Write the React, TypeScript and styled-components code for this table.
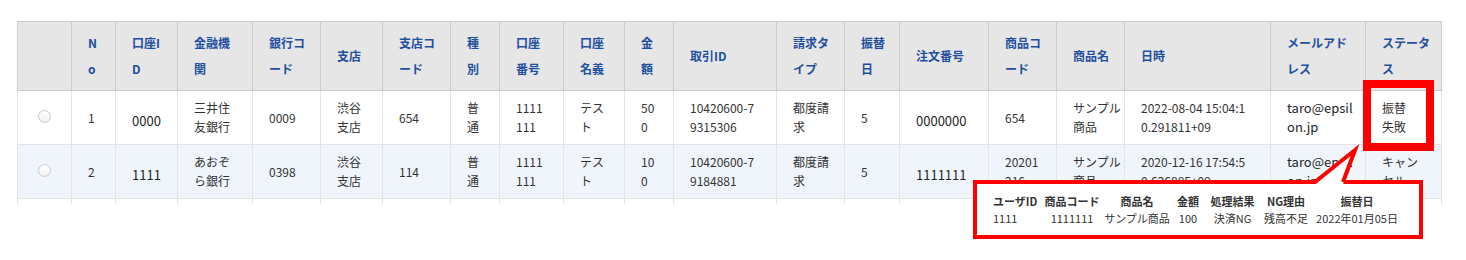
import React from "react";
import styled, { createGlobalStyle } from "styled-components";

const GlobalStyle = createGlobalStyle`
  html, body {
    margin: 0;
    padding: 0;
    background: #ffffff;
  }
  body {
    font-family: "Noto Sans CJK JP", "Noto Sans", sans-serif;
    color: #333333;
  }
`;

const Page = styled.div`
  position: relative;
  width: 1466px;
  height: 260px;
  box-sizing: border-box;
  padding: 21px 0 0 17px;
  overflow: hidden;
`;

const TableViewport = styled.div`
  width: 1425px;
  height: 183px;
  overflow: hidden;
`;

const Table = styled.table`
  border-collapse: collapse;
  table-layout: fixed;
  width: 1424px;
`;

const Col = styled.col<{ $w: number }>`
  width: ${(p) => p.$w}px;
`;

const HeadCell = styled.th`
  background: #e6e6e6;
  border: 1px solid #cdcdcd;
  color: #1f4f9f;
  font-size: 12px;
  font-weight: 700;
  line-height: 26px;
  padding: 8px 0 8px 16px;
  text-align: left;
  vertical-align: middle;
  white-space: pre;
  overflow: hidden;
`;

const BodyRow = styled.tr<{ $alt?: boolean }>`
  background: ${(p) => (p.$alt ? "#f0f5fc" : "#ffffff")};
`;

const Cell = styled.td<{ $large?: boolean; $center?: boolean; $shift?: number }>`
  border: 1px solid #e3e3e3;
  color: ${(p) => (p.$large ? "#262626" : "#333333")};
  font-size: ${(p) => (p.$large ? 13 : 12)}px;
  line-height: 19px;
  padding: ${(p) => 7 + (p.$shift ?? 0)}px 0 ${(p) => 8 - (p.$shift ?? 0)}px
    ${(p) => (p.$center ? 0 : 16)}px;
  text-align: ${(p) => (p.$center ? "center" : "left")};
  vertical-align: middle;
  white-space: pre;
  overflow: hidden;
`;

const Radio = styled.span`
  display: inline-block;
  width: 13px;
  height: 13px;
  box-sizing: border-box;
  border: 1px solid #c9c9c9;
  border-radius: 50%;
  background: linear-gradient(#ffffff, #f1f1f1);
  vertical-align: middle;
`;

const StatusHighlight = styled.div`
  position: absolute;
  left: 1363px;
  top: 80px;
  width: 71px;
  height: 71px;
  box-sizing: border-box;
  border: 8px solid #ff0000;
  pointer-events: none;
`;

const Callout = styled.div`
  position: absolute;
  left: 973px;
  top: 180px;
  width: 450px;
  height: 59px;
  box-sizing: border-box;
  border: 4px solid #ff0000;
  background: #ffffff;
  padding: 9px 0 0 16px;
`;

const CalloutGrid = styled.div`
  display: grid;
  grid-template-columns: 48px 62px 68px 34px 55px 52px 90px;
  font-size: 11px;
  line-height: 17px;
  color: #333333;
  white-space: nowrap;
`;

const CalloutText = styled.span<{ $head?: boolean; $first?: boolean }>`
  font-weight: ${(p) => (p.$head ? 600 : 400)};
  text-align: ${(p) => (p.$first ? "left" : "center")};
`;

const Tail = styled.svg`
  position: absolute;
  left: 1305px;
  top: 146px;
  width: 56px;
  height: 40px;
  overflow: visible;
`;

type Column = { w: number; head: string };

const columns: Column[] = [
  { w: 54, head: "" },
  { w: 44, head: "N\no" },
  { w: 62, head: "口座I\nD" },
  { w: 75, head: "金融機\n関" },
  { w: 68, head: "銀行コ\nード" },
  { w: 62, head: "支店" },
  { w: 68, head: "支店コ\nード" },
  { w: 49, head: "種\n別" },
  { w: 64, head: "口座\n番号" },
  { w: 61, head: "口座\n名義" },
  { w: 49, head: "金\n額" },
  { w: 103, head: "取引ID" },
  { w: 68, head: "請求タ\nイプ" },
  { w: 55, head: "振替\n日" },
  { w: 89, head: "注文番号" },
  { w: 68, head: "商品コ\nード" },
  { w: 68, head: "商品名" },
  { w: 146, head: "日時" },
  { w: 95, head: "メールアド\nレス" },
  { w: 76, head: "ステータ\nス" },
];

type Row = {
  no: string;
  accountId: string;
  bank: string;
  bankCode: string;
  branch: string;
  branchCode: string;
  kind: string;
  accountNo: string;
  holder: string;
  amount: string;
  txId: string;
  billing: string;
  day: string;
  order: string;
  productCode: string;
  product: string;
  datetime: string;
  mail: string;
  status: string;
};

const rows: Row[] = [
  {
    no: "1",
    accountId: "0000",
    bank: "三井住\n友銀行",
    bankCode: "0009",
    branch: "渋谷\n支店",
    branchCode: "654",
    kind: "普\n通",
    accountNo: "1111\n111",
    holder: "テス\nト",
    amount: "50\n0",
    txId: "10420600-7\n9315306",
    billing: "都度請\n求",
    day: "5",
    order: "0000000",
    productCode: "654",
    product: "サンプル\n商品",
    datetime: "2022-08-04 15:04:1\n0.291811+09",
    mail: "taro@epsil\non.jp",
    status: "振替\n失敗",
  },
  {
    no: "2",
    accountId: "1111",
    bank: "あおぞ\nら銀行",
    bankCode: "0398",
    branch: "渋谷\n支店",
    branchCode: "114",
    kind: "普\n通",
    accountNo: "1111\n111",
    holder: "テス\nト",
    amount: "10\n0",
    txId: "10420600-7\n9184881",
    billing: "都度請\n求",
    day: "5",
    order: "1111111",
    productCode: "20201\n216",
    product: "サンプル\n商品",
    datetime: "2020-12-16 17:54:5\n0.626885+09",
    mail: "taro@epsil\non.jp",
    status: "キャン\nセル",
  },
  {
    no: "3",
    accountId: "2222",
    bank: "みずほ\n銀行",
    bankCode: "0001",
    branch: "渋谷\n支店",
    branchCode: "210",
    kind: "普\n通",
    accountNo: "1111\n111",
    holder: "テス\nト",
    amount: "30\n0",
    txId: "10420600-7\n9100012",
    billing: "都度請\n求",
    day: "5",
    order: "2222222",
    productCode: "654",
    product: "サンプル\n商品",
    datetime: "2020-11-05 10:12:3\n0.104512+09",
    mail: "taro@epsil\non.jp",
    status: "振替\n成功",
  },
];

const calloutHeads = ["ユーザID", "商品コード", "商品名", "金額", "処理結果", "NG理由", "振替日"];
const calloutValues = ["1111", "1111111", "サンプル商品", "100", "決済NG", "残高不足", "2022年01月05日"];

export default function App() {
  return (
    <>
      <GlobalStyle />
      <Page>
        <TableViewport>
          <Table>
            <colgroup>
              {columns.map((c, i) => (
                <Col key={i} $w={c.w} />
              ))}
            </colgroup>
            <thead>
              <tr>
                {columns.map((c, i) => (
                  <HeadCell key={i}>{c.head}</HeadCell>
                ))}
              </tr>
            </thead>
            <tbody>
              {rows.map((r, i) => (
                <BodyRow key={r.no} $alt={i % 2 === 1}>
                  <Cell $center $shift={-3}>
                    <Radio />
                  </Cell>
                  <Cell>{r.no}</Cell>
                  <Cell $large $shift={3}>
                    {r.accountId}
                  </Cell>
                  <Cell>{r.bank}</Cell>
                  <Cell>{r.bankCode}</Cell>
                  <Cell>{r.branch}</Cell>
                  <Cell>{r.branchCode}</Cell>
                  <Cell>{r.kind}</Cell>
                  <Cell>{r.accountNo}</Cell>
                  <Cell>{r.holder}</Cell>
                  <Cell>{r.amount}</Cell>
                  <Cell>{r.txId}</Cell>
                  <Cell>{r.billing}</Cell>
                  <Cell>{r.day}</Cell>
                  <Cell $large $shift={3}>
                    {r.order}
                  </Cell>
                  <Cell>{r.productCode}</Cell>
                  <Cell>{r.product}</Cell>
                  <Cell>{r.datetime}</Cell>
                  <Cell $large>{r.mail}</Cell>
                  <Cell>{r.status}</Cell>
                </BodyRow>
              ))}
            </tbody>
          </Table>
        </TableViewport>

        <StatusHighlight />

        <Callout>
          <CalloutGrid>
            {calloutHeads.map((h, i) => (
              <CalloutText key={"h" + i} $head $first={i === 0}>
                {h}
              </CalloutText>
            ))}
            {calloutValues.map((v, i) => (
              <CalloutText key={"v" + i} $first={i === 0}>
                {v}
              </CalloutText>
            ))}
          </CalloutGrid>
        </Callout>

        <Tail viewBox="0 0 56 40">
          <polygon points="10,38.5 50,4 38,38.5" fill="#ffffff" />
          <polyline
            points="10,36 50,4 38,36"
            fill="none"
            stroke="#ff0000"
            strokeWidth="4"
            strokeLinejoin="miter"
          />
        </Tail>
      </Page>
    </>
  );
}
